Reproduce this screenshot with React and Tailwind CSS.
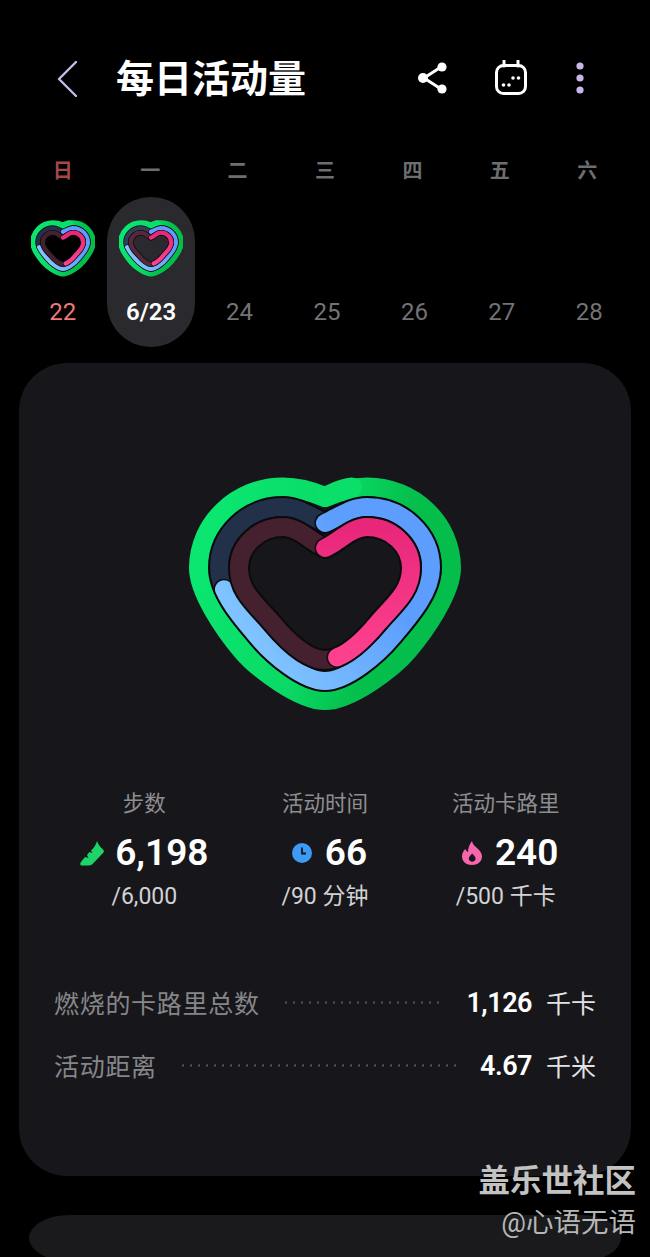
const days = ["日", "一", "二", "三", "四", "五", "六"];
const dates = ["22", "6/23", "24", "25", "26", "27", "28"];

// heart outline, starts at the notch and runs clockwise
const heartPath = (w, top, notch, bottom, jx, jy) => {
  const cx = 136;
  const midY = 91;
  const lobe = (midY - top) * 0.55;
  const side = (s) => [
    `${cx + s * 14} ${notch - 6}`,
    `${cx + s * 26} ${top}`,
    `${cx + s * 42} ${top}`,
    `${cx + s * (42 + (w - 42) * 0.55)} ${top}`,
    `${cx + s * w} ${midY - lobe}`,
    `${cx + s * w} ${midY}`,
    `${cx + s * w} ${midY + 24}`,
    `${cx + s * (jx + 17)} ${jy - 20}`,
    `${cx + s * jx} ${jy}`,
    `${cx + s * (jx - 15)} ${jy + 18}`,
    `${cx + s * w * 0.2} ${bottom}`,
    `${cx} ${bottom}`,
  ];
  const right = side(1);
  const left = side(-1).slice(0, 11).reverse().concat(`${cx} ${notch}`);
  const toCurves = (pts) => {
    let out = "";
    for (let i = 0; i < pts.length; i += 3) out += `C${pts[i]} ${pts[i + 1]} ${pts[i + 2]} `;
    return out;
  };
  return `M${cx} ${notch} ${toCurves(right)}${toCurves(left)}`;
};

const green = heartPath(126, 10.5, 20, 223, 83, 173);
const blue = heartPath(106, 30, 46, 204, 67, 160);
const pink = heartPath(86, 50, 71, 183, 52, 147);

function Rings({ id, className, blueTrack = "#22304a", pinkTrack = "#45202e", greenWidth = 20, edge = 21 }) {
  return (
    <svg viewBox="0 0 272 234" className={className} fill="none" strokeLinecap="round">
      <defs>
        <linearGradient id={`${id}g`} x1="0" y1="0" x2="1" y2="0.25">
          <stop offset="0.1" stopColor="#0ae66f" />
          <stop offset="0.55" stopColor="#0ad965" />
          <stop offset="0.8" stopColor="#05c04d" />
          <stop offset="1" stopColor="#04bd4b" />
        </linearGradient>
        <linearGradient id={`${id}b`} x1="1" y1="0" x2="0" y2="0.6">
          <stop offset="0.35" stopColor="#5c9dfd" />
          <stop offset="1" stopColor="#82c6ff" />
        </linearGradient>
        <linearGradient id={`${id}p`} x1="0" y1="0" x2="0" y2="1">
          <stop offset="0" stopColor="#e8277a" />
          <stop offset="1" stopColor="#fe418f" />
        </linearGradient>
      </defs>

      <path d={green} stroke={`url(#${id}g)`} strokeWidth={greenWidth} />
      <path d="M136 20C146 15.5 153 11 163 10.5" stroke="#0ae069" strokeWidth={greenWidth} />

      <path d={blue} stroke="#0b0b0e" strokeWidth={edge + 1} />
      <path d={blue} stroke={blueTrack} strokeWidth="18" />
      <path d={blue} pathLength="100" strokeDasharray="73 200" stroke="#0b0b0e" strokeWidth={edge} />
      <path d={blue} pathLength="100" strokeDasharray="73 200" stroke={`url(#${id}b)`} strokeWidth="18" />

      <path d={pink} stroke="#0b0b0e" strokeWidth={edge + 1} />
      <path d={pink} stroke={pinkTrack} strokeWidth="18" />
      <path d={pink} pathLength="100" strokeDasharray="47.5 200" stroke="#0b0b0e" strokeWidth={edge} />
      <path d={pink} pathLength="100" strokeDasharray="47.5 200" stroke={`url(#${id}p)`} strokeWidth="18" />
    </svg>
  );
}

const ShoeIcon = () => (
  <svg viewBox="0 0 24 25" className="w-[24px] h-[25px]">
    <path
      d="M17 0C18 3 20 6 23 8.5C24.3 9.8 24 11 23 12L13 22.5C12 23.6 10.5 24.5 9 24.5L1.5 24.5C0 24.5 -0.2 22.5 1 21L5 16L8.5 17L7 14L9.5 11L12.5 12L11 9.5C14 7 16 4 17 0Z"
      fill="#1ed469"
    />
  </svg>
);

const ClockIcon = () => (
  <svg viewBox="0 0 20 20" className="w-[20px] h-[20px]">
    <circle cx="10" cy="10" r="10" fill="#3d9bf5" />
    <path d="M10 4.5V10.5H14" stroke="#17171b" strokeWidth="1.8" fill="none" />
  </svg>
);

const FlameIcon = () => (
  <svg viewBox="0 0 20 24" className="w-[20px] h-[24px]">
    <path
      d="M10 0C10.5 3.5 13 5 15.5 7.5C18.5 10.3 20 12.6 20 15.5C20 20.5 15.5 24 10 24C4.5 24 0 20.5 0 15.5C0 12.5 1.3 10 3.4 8C4 9.6 4.8 10.5 6 11C6 7 7.5 3 10 0Z"
      fill="#f766ad"
    />
    <path d="M10.2 12.5C11.6 14.4 13.6 15.6 13.6 17.6C13.6 19.6 12 20.8 10.2 20.8C8.4 20.8 6.8 19.6 6.8 17.6C6.8 15.6 8.8 14.4 10.2 12.5Z" fill="#17171b" />
  </svg>
);

function Stat({ label, value, goal, icon, gap }) {
  return (
    <div className="flex flex-col items-center">
      <div className="text-[21.5px] leading-[28px] text-[#8e8e91]">{label}</div>
      <div className={`mt-[13px] flex items-center h-[44px] ${gap}`}>
        {icon}
        <span className="text-[37px] leading-[44px] font-semibold text-white">{value}</span>
      </div>
      <div className="mt-[8px] text-[23px] leading-[28px] text-[#d2d2d4]">{goal}</div>
    </div>
  );
}

function Row({ label, value, unit, dotsEnd }) {
  return (
    <div className="flex items-center h-[40px]">
      <span className="text-[25px] tracking-[0.7px] text-[#86868a]">{label}</span>
      <div className="flex-1 ml-[22px] mb-[6px] h-[3px] bg-[radial-gradient(circle,#515154_1px,transparent_1.3px)] bg-[length:8px_3px]" />
      <span className={`${dotsEnd} text-[27px] tracking-[-0.5px] font-semibold text-white mb-[3px]`}>{value}</span>
      <span className="ml-[14px] text-[25px] text-[#e2e2e4]">{unit}</span>
    </div>
  );
}

export default function App() {
  return (
    <div className="relative w-[650px] h-[1257px] overflow-hidden bg-black font-['Roboto','Noto_Sans_CJK_SC',sans-serif]">
      {/* header */}
      <div className="pt-[53px] h-[104px] flex items-center">
        <svg viewBox="0 0 20 36" className="ml-[57px] w-[20px] h-[36px]" fill="none">
          <path d="M19 1L2 18L19 35" stroke="#c6b8ea" strokeWidth="2.4" strokeLinecap="round" strokeLinejoin="round" />
        </svg>
        <h1 className="ml-[39px] text-[38px] leading-[52px] font-bold text-white">每日活动量</h1>
        <svg viewBox="0 0 34 34" className="ml-auto w-[34px] h-[34px] -mt-[2px]" fill="#fff" stroke="#fff">
          <path d="M8 17L25 6M8 17L25 28" strokeWidth="3" fill="none" />
          <circle cx="7" cy="17" r="5" stroke="none" />
          <circle cx="26" cy="6" r="4.6" stroke="none" />
          <circle cx="26" cy="28" r="4.6" stroke="none" />
        </svg>
        <svg viewBox="0 0 34 36" className="ml-[44px] w-[34px] h-[36px] -mt-[2px]" fill="none">
          <rect x="2.5" y="5.5" width="29" height="28" rx="7" stroke="#fff" strokeWidth="3" />
          <path d="M10 1V6M24 1V6" stroke="#fff" strokeWidth="3" strokeLinecap="round" />
          <g fill="#fff">
            <circle cx="9.5" cy="25" r="1.8" />
            <circle cx="15" cy="25" r="1.8" />
            <circle cx="19" cy="18" r="1.8" />
            <circle cx="24.5" cy="18" r="1.8" />
          </g>
        </svg>
        <svg viewBox="0 0 8 32" className="ml-[48px] mr-[66px] w-[8px] h-[32px] -mt-[2px]" fill="#c9b6e9">
          <circle cx="4" cy="4" r="3.6" />
          <circle cx="4" cy="16" r="3.6" />
          <circle cx="4" cy="28" r="3.6" />
        </svg>
      </div>

      {/* week strip */}
      <div className="mx-[19px] mt-[55px] grid grid-cols-7">
        {days.map((d, i) => (
          <div
            key={d}
            className={`text-center text-[20px] leading-[24px] font-bold ${i === 0 ? "text-[#a5484a]" : "text-[#6e6e71]"}`}
          >
            {d}
          </div>
        ))}
      </div>
      <div className="mx-[19px] mt-[14px] grid grid-cols-7">
        {dates.map((d, i) => (
          <div
            key={d}
            className={`h-[150px] flex flex-col items-center rounded-full ${i === 1 ? "bg-[#2a2a2e] translate-x-[1px]" : ""}`}
          >
            <div className="h-[57px] mt-[23px]">
              {i < 2 && (
                <Rings
                  id={`day${i}`}
                  className="w-[64px] h-[57px]"
                  blueTrack={i === 1 ? "#343d57" : "#22304a"}
                  pinkTrack={i === 1 ? "#55283a" : "#45202e"}
                  greenWidth={27}
                  edge={23}
                />
              )}
            </div>
            <div
              className={`mt-[20px] text-[24px] leading-[30px] ${
                i === 0 ? "text-[#ee7a78]" : i === 1 ? "text-white font-semibold" : "text-[#737376] ml-[4px]"
              }`}
            >
              {d}
            </div>
          </div>
        ))}
      </div>

      {/* main card */}
      <div className="mx-[19px] mt-[16px] h-[813px] rounded-[48px] bg-[#17171b] px-[35px] pt-[114px]">
        <Rings id="main" className="mx-auto w-[272px] h-[234px]" />

        <div className="mt-[79px] grid grid-cols-3">
          <Stat label="步数" value="6,198" goal="/6,000" icon={<ShoeIcon />} gap="gap-[11px]" />
          <Stat label="活动时间" value="66" goal="/90 分钟" icon={<ClockIcon />} gap="gap-[13px] ml-[9px]" />
          <Stat label="活动卡路里" value="240" goal="/500 千卡" icon={<FlameIcon />} gap="gap-[13px] ml-[9px]" />
        </div>

        <div className="mt-[74px] flex flex-col gap-[23px]">
          <Row label="燃烧的卡路里总数" value="1,126" unit="千卡" dotsEnd="ml-[26px]" />
          <Row label="活动距离" value="4.67" unit="千米" dotsEnd="ml-[20px]" />
        </div>
      </div>

      {/* next card peeking in */}
      <div className="ml-[29px] mt-[39px] w-[592px] h-[46px] rounded-[40px/23px] bg-[#1a1a1d]" />

      {/* watermark */}
      <div className="absolute right-[14px] top-[1162px] flex flex-col items-end">
        <span className="text-[31.5px] leading-[40px] font-bold text-[#c2c2c2]">盖乐世社区</span>
        <span className="mt-[3px] text-[27.5px] leading-[36px] text-[#b6b6b6]">@心语无语</span>
      </div>
    </div>
  );
}
